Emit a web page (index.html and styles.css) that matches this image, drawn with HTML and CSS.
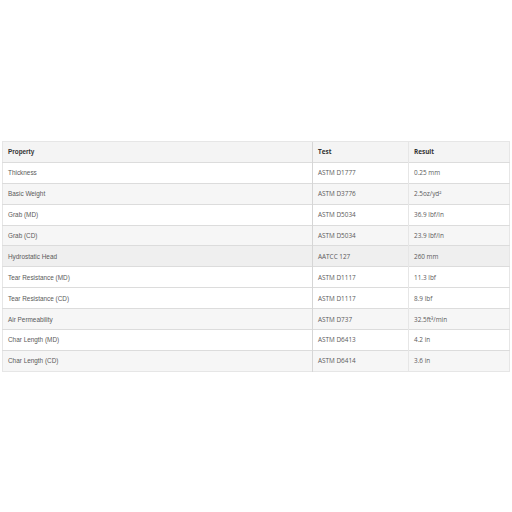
FILE: index.html
```html
<!DOCTYPE html>
<html>
<head>
<meta charset="utf-8">
<link rel="stylesheet" href="styles.css">
</head>
<body>
<div class="wrap">
<table class="specs">
<thead>
<tr><th class="c1">Property</th><th class="c2">Test</th><th class="c3">Result</th></tr>
</thead>
<tbody>
<tr><td class="c1">Thickness</td><td class="c2">ASTM D1777</td><td class="c3">0.25 mm</td></tr>
<tr class="alt"><td class="c1">Basic Weight</td><td class="c2">ASTM D3776</td><td class="c3">2.5oz/yd²</td></tr>
<tr><td class="c1">Grab (MD)</td><td class="c2">ASTM D5034</td><td class="c3">36.9 lbf/in</td></tr>
<tr class="alt"><td class="c1">Grab (CD)</td><td class="c2">ASTM D5034</td><td class="c3">23.9 lbf/in</td></tr>
<tr class="hover"><td class="c1">Hydrostatic Head</td><td class="c2">AATCC 127</td><td class="c3">260 mm</td></tr>
<tr><td class="c1">Tear Resistance (MD)</td><td class="c2">ASTM D1117</td><td class="c3">11.3 lbf</td></tr>
<tr><td class="c1">Tear Resistance (CD)</td><td class="c2">ASTM D1117</td><td class="c3">8.9 lbf</td></tr>
<tr class="alt"><td class="c1">Air Permeability</td><td class="c2">ASTM D737</td><td class="c3">32.5ft³/min</td></tr>
<tr><td class="c1">Char Length (MD)</td><td class="c2">ASTM D6413</td><td class="c3">4.2 in</td></tr>
<tr class="alt"><td class="c1">Char Length (CD)</td><td class="c2">ASTM D6414</td><td class="c3">3.6 in</td></tr>
</tbody>
</table>
</div>
</body>
</html>
```
FILE: styles.css
```css
html, body {
  margin: 0;
  padding: 0;
  background: #ffffff;
}
.wrap {
  padding: 141px 2px 0 2px;
}
.specs {
  width: 508px;
  border-collapse: collapse;
  table-layout: fixed;
  font-family: "Open Sans", "Liberation Sans", sans-serif;
  font-size: 6.4px;
  color: #5a5a5a;
  border: 1px solid #e6e6e6;
}
.specs th, .specs td {
  height: 19.9px;
  padding: 0 5px;
  text-align: left;
  vertical-align: middle;
  border-top: 1px solid #dcdcdc;
  white-space: nowrap;
}
.specs th {
  font-weight: 700;
  color: #333333;
  background: #f4f4f4;
  border-top: 1px solid #e6e6e6;
}
.specs .c1 {
  width: 299px;
  font-family: "Liberation Sans", Arial, sans-serif;
}
.specs .c2 {
  width: 85px;
  border-left: 1px solid #d6d6d6;
}
.specs .c3 {
  border-left: 1px solid #e6e6e6;
}
.specs tr.alt td {
  background: #f6f6f6;
}
.specs tr.hover td {
  background: #efefef;
}
```
